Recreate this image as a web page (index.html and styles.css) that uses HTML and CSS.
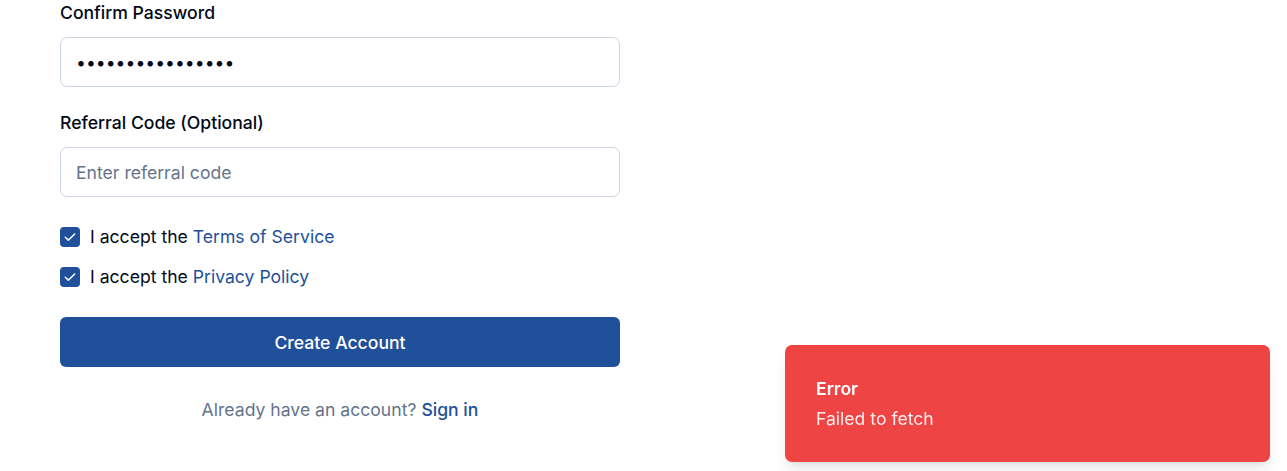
FILE: index.html
```html
<!DOCTYPE html>
<html lang="en">
<head>
  <meta charset="UTF-8" />
  <meta name="viewport" content="width=device-width, initial-scale=1.0"/>
  <title>Create Account</title>
  <link rel="stylesheet" href="styles.css">
</head>
<body>

  <form class="signup" id="signupForm">
    <div class="field">
      <label for="passwordConfirm">Confirm Password</label>
      <input type="password" id="passwordConfirm" name="passwordConfirm" value="superSecret12345">
    </div>

    <div class="field">
      <label for="referral">Referral Code (Optional)</label>
      <input type="text" id="referral" name="referral" placeholder="Enter referral code">
    </div>

    <div class="checks">
      <label class="check">
        <input type="checkbox" checked>
        <span class="box">
          <svg viewBox="0 0 24 24" width="16" height="16"><path d="M5 12.5l4.5 4.5L19 7.5" fill="none" stroke="#fff" stroke-width="2.2" stroke-linecap="round" stroke-linejoin="round"/></svg>
        </span>
        <span>I accept the <a href="#">Terms of Service</a></span>
      </label>
      <label class="check">
        <input type="checkbox" checked>
        <span class="box">
          <svg viewBox="0 0 24 24" width="16" height="16"><path d="M5 12.5l4.5 4.5L19 7.5" fill="none" stroke="#fff" stroke-width="2.2" stroke-linecap="round" stroke-linejoin="round"/></svg>
        </span>
        <span>I accept the <a href="#">Privacy Policy</a></span>
      </label>
    </div>

    <button type="submit">Create Account</button>

    <p class="switch">Already have an account? <a href="#">Sign in</a></p>
  </form>

  <div class="toast" role="alert">
    <div class="toast-title">Error</div>
    <div class="toast-text">Failed to fetch</div>
  </div>

</body>
</html>
```

FILE: styles.css
```css
body {
  margin: 0;
  font-family: Inter, "Noto Sans", sans-serif;
  color: #020817;
  background: #fff;
}
.signup {
  width: 560px;
  padding: 1px 0 0 60px;
}
.field label {
  display: block;
  font-size: 17.6px;
  font-weight: 500;
  line-height: 24px;
}
.field input {
  display: block;
  width: 100%;
  height: 50px;
  box-sizing: border-box;
  margin-top: 12px;
  margin-bottom: 24px;
  padding: 0 15px;
  border: 1px solid #cbd5e1;
  border-radius: 7px;
  font-family: inherit;
  font-size: 17.6px;
  color: #020817;
  outline: none;
}
.field input::placeholder {
  color: #64748b;
}
.checks {
  display: flex;
  flex-direction: column;
  gap: 16px;
  margin-top: 28px;
}
.check {
  display: flex;
  align-items: center;
  gap: 10px;
  font-size: 17.6px;
  line-height: 24px;
  cursor: pointer;
}
.check input {
  display: none;
}
.box {
  width: 20px;
  height: 20px;
  border-radius: 4px;
  background: #21509a;
  display: flex;
  align-items: center;
  justify-content: center;
}
.check a,
.switch a {
  color: #21509a;
  text-decoration: none;
}
button {
  display: block;
  width: 100%;
  height: 50px;
  margin-top: 28px;
  border: none;
  border-radius: 6px;
  background: #21509a;
  color: white;
  font-family: inherit;
  font-size: 17.6px;
  font-weight: 500;
  cursor: pointer;
}
.switch {
  margin: 31px 0 0;
  text-align: center;
  font-size: 17.6px;
  line-height: 24px;
  color: #64748b;
}
.switch a {
  font-weight: 500;
}
.toast {
  position: fixed;
  right: 17px;
  bottom: 9px;
  width: 485px;
  box-sizing: border-box;
  padding: 32px 31px 31px;
  border-radius: 7px;
  background: #ef4444;
  color: #fff;
  box-shadow: 0 10px 15px -3px rgba(0,0,0,0.1), 0 4px 6px -4px rgba(0,0,0,0.1);
}
.toast-title {
  font-size: 17.6px;
  font-weight: 600;
  line-height: 24px;
}
.toast-text {
  margin-top: 6px;
  font-size: 17.6px;
  line-height: 24px;
  opacity: 0.9;
}
```
